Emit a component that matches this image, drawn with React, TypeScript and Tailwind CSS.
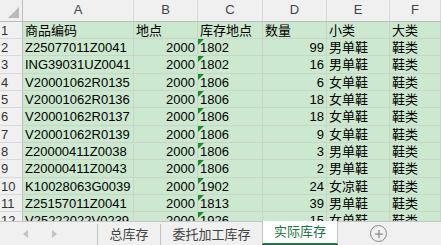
import { Plus } from 'lucide-react';

const rows = [
  ['商品编码', '地点', '库存地点', '数量', '小类', '大类'],
  ['Z25077011Z0041', '2000', '1802', '99', '男单鞋', '鞋类'],
  ['ING39031UZ0041', '2000', '1802', '16', '男单鞋', '鞋类'],
  ['V20001062R0135', '2000', '1806', '6', '女单鞋', '鞋类'],
  ['V20001062R0136', '2000', '1806', '18', '女单鞋', '鞋类'],
  ['V20001062R0137', '2000', '1806', '18', '女单鞋', '鞋类'],
  ['V20001062R0139', '2000', '1806', '9', '女单鞋', '鞋类'],
  ['Z20000411Z0038', '2000', '1806', '3', '男单鞋', '鞋类'],
  ['Z20000411Z0043', '2000', '1806', '2', '男单鞋', '鞋类'],
  ['K10028063G0039', '2000', '1902', '24', '女凉鞋', '鞋类'],
  ['Z25157011Z0041', '2000', '1813', '39', '男单鞋', '鞋类'],
  ['V25222022V0239', '2000', '1926', '15', '女单鞋', '鞋类'],
];

const cols = [
  { key: 'A', w: 'w-[111px]' },
  { key: 'B', w: 'w-[64px]' },
  { key: 'C', w: 'w-[65px]' },
  { key: 'D', w: 'w-[64px]' },
  { key: 'E', w: 'w-[63px]' },
  { key: 'F', w: 'flex-1' },
];

const font = "font-['Liberation_Sans','Noto_Sans_CJK_SC',sans-serif]";

export default function App() {
  return (
    <div className={`w-[441px] h-[245px] overflow-hidden bg-white flex flex-col ${font} text-[13px] text-black`}>
      <div className="h-[221px] overflow-hidden flex flex-col">
        {/* column letters */}
        <div className="flex h-[22px] shrink-0 bg-[#f0f0f0] border-b border-[#bdbdbd]">
          <div className="relative w-[23px] shrink-0 border-r border-[#bdbdbd]">
            <svg className="absolute right-[3px] bottom-[3px]" width="11" height="11">
              <polygon points="11,0 11,11 0,11" fill="#b9b9b9" />
            </svg>
          </div>
          {cols.map((c) => (
            <div key={c.key} className={`${c.w} shrink-0 border-r border-[#d9d9d9] flex items-end justify-center pb-[2px] text-[#444]`}>
              {c.key}
            </div>
          ))}
        </div>
        {rows.map((r, i) => (
          <div
            key={i}
            className={`flex shrink-0 ${i % 3 === 2 ? 'h-[18px]' : 'h-[17px]'}`}
          >
            <div className="w-[23px] shrink-0 bg-[#f0f0f0] border-r border-b border-r-[#bdbdbd] border-b-[#d9d9d9] flex items-center pl-[1px] text-[#333] leading-none">
              {i + 1}
            </div>
            {r.map((v, j) => {
              const right = i > 0 && (j === 1 || j === 3);
              return (
                <div
                  key={j}
                  className={`${cols[j].w} shrink-0 relative bg-[#cce8cf] border-r border-b border-[#c9d5cb] flex items-center px-[2px] whitespace-nowrap overflow-hidden leading-none ${right ? 'justify-end' : ''}`}
                >
                  {i > 0 && j === 2 && (
                    <svg className="absolute left-0 top-0" width="6" height="6">
                      <polygon points="0,0 6,0 0,6" fill="#1b8a2f" />
                    </svg>
                  )}
                  {v}
                </div>
              );
            })}
          </div>
        ))}
      </div>

      {/* sheet tabs */}
      <div className="flex h-[24px] bg-[#f0f0f0] border-t border-[#c6c6c6] text-[#444]">
        <div className="w-[97px] shrink-0 flex items-center pl-[23px] gap-[24px]">
          <svg width="5" height="8">
            <polygon points="5,0 5,8 0,4" fill="#c4c4c4" />
          </svg>
          <svg width="5" height="8">
            <polygon points="0,0 0,8 5,4" fill="#c4c4c4" />
          </svg>
        </div>
        <div className="w-[63px] shrink-0 border-l border-[#c3c3c3] mt-[2px] flex items-center justify-center">
          总库存
        </div>
        <div className="w-[102px] shrink-0 border-l border-[#c3c3c3] mt-[2px] flex items-center justify-center">
          委托加工库存
        </div>
        <div className="w-[76px] shrink-0 -mt-px bg-white border-x border-[#c3c3c3] border-b-2 border-b-[#217346] flex items-center justify-center text-[#217346]">
          实际库存
        </div>
        <div className="flex-1 flex items-center pl-[32px]">
          <div className="w-[17px] h-[17px] rounded-full border-[1.5px] border-[#8a8a8a] flex items-center justify-center">
            <Plus size={12} strokeWidth={2.5} className="text-[#8a8a8a]" />
          </div>
        </div>
      </div>
    </div>
  );
}
